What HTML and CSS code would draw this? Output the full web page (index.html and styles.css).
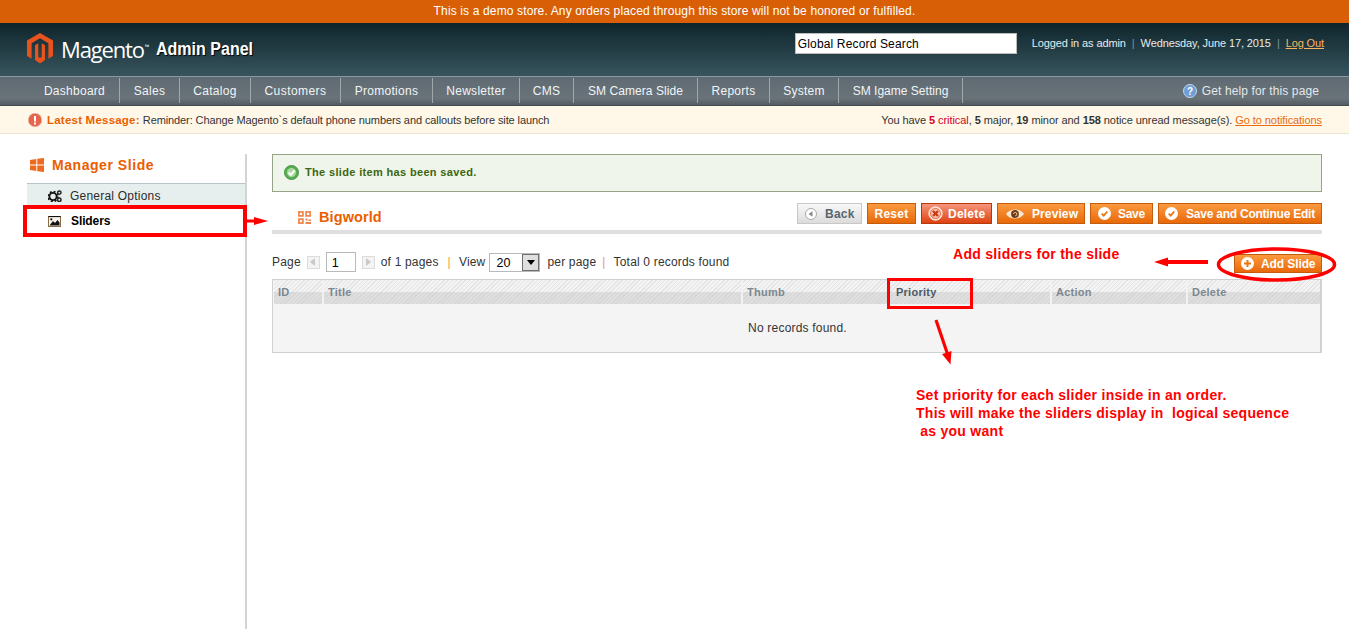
FILE: index.html
```html
<!DOCTYPE html>
<html lang="en">
<head>
<meta charset="utf-8">
<title>Magento Admin Panel</title>
<link rel="stylesheet" href="styles.css">
</head>
<body>
<div class="page">
  <div class="demo">This is a demo store. Any orders placed through this store will not be honored or fulfilled.</div>
  <header class="header">
    <div class="logo">
      <svg class="logo-mark" viewBox="0 0 26 31" width="26" height="31"><path fill="#e8531d" d="M13 0 26 7.500V23l-4.600 2.700V10.200L13 5.300 4.600 10.200v15.500L0 23V7.500z"/><path fill="#e8531d" d="M8 12.200 11.300 10.300V24l1.700 1 1.700-1V10.300L18 12.200V27l-5 3.500L8 27z"/></svg>
      <span class="logo-word">Magento<sup class="tm">™</sup></span>
      <span class="logo-sub">Admin Panel</span>
    </div>
    <div class="header-right">
      <div class="search">Global Record Search</div>
      <div class="user"><span>Logged in as admin</span><i>|</i><span>Wednesday, June 17, 2015</span><i>|</i><a class="logout">Log Out</a></div>
    </div>
  </header>
  <nav class="nav">
    <ul class="menu">
      <li>Dashboard</li><li>Sales</li><li>Catalog</li><li>Customers</li><li>Promotions</li><li>Newsletter</li><li>CMS</li><li>SM Camera Slide</li><li>Reports</li><li>System</li><li>SM Igame Setting</li>
    </ul>
    <div class="help">
      <svg viewBox="0 0 14 14" width="14" height="14"><circle cx="7" cy="7" r="6.500" fill="#6d9fd6" stroke="#c3d7ee"/><text class="help-q" x="7" y="10.500" text-anchor="middle">?</text></svg>
      <span>Get help for this page</span>
    </div>
  </nav>
  <div class="notice">
    <div class="notice-left">
      <svg viewBox="0 0 14 14" width="14" height="14"><circle cx="7" cy="7" r="6.800" fill="#e8644a" stroke="#d9c4b4" stroke-width=".6"/><rect x="6" y="3" width="2" height="5.500" fill="#fff"/><rect x="6" y="9.500" width="2" height="2" fill="#fff"/></svg>
      <b class="latest">Latest Message:</b> <span>Reminder: Change Magento`s default phone numbers and callouts before site launch</span>
    </div>
    <div class="notice-right">You have <span class="crit"><b>5</b> critical</span>, <b>5</b> major, <b>19</b> minor and <b>158</b> notice unread message(s). <a class="goto">Go to notifications</a></div>
  </div>

  <main class="main">
    <aside class="side">
      <h3 class="side-title">
        <svg viewBox="0 0 14 14" width="14" height="14"><path fill="#ee6a1f" d="M0 2 6.300 1V6.500H0zM7.300.800 14 0V6.500H7.300zM0 7.500H6.300V13L0 12zM7.300 7.500H14V14L7.300 13.200z"/></svg>
        Manager Slide
      </h3>
      <ul class="side-list">
        <li class="side-item side-general">
          <svg viewBox="0 0 14 12" width="14" height="12"><circle cx="5" cy="6.500" r="3.600" fill="none" stroke="#111" stroke-width="1.800"/><circle cx="5" cy="6.500" r="5" fill="none" stroke="#111" stroke-width="1.600" stroke-dasharray="2 1.930"/><circle cx="11.300" cy="2.600" r="1.700" fill="none" stroke="#222" stroke-width="1.500"/><circle cx="11.300" cy="9.800" r="1.700" fill="none" stroke="#222" stroke-width="1.500"/></svg>
          General Options
        </li>
        <li class="side-item side-active">
          <svg viewBox="0 0 13 11" width="13" height="11"><rect x=".5" y=".5" width="12" height="10" fill="#f7f3ea" stroke="#8a6f4a"/><path d="M.5 .5H12.500" stroke="#111" stroke-width="1.200"/><path fill="#111" d="M1.500 9.500 5 5l2 2 2.500-3 2 2.500v3z"/><circle cx="3.300" cy="3.300" r="1.100" fill="#111"/></svg>
          Sliders
        </li>
      </ul>
    </aside>

    <section class="content">
      <div class="success">
        <svg viewBox="0 0 15 15" width="15" height="15"><circle cx="7.500" cy="7.500" r="7" fill="#55ad4e" stroke="#4a9248"/><circle cx="7.500" cy="7.500" r="4.500" fill="#a9d9a0"/><path d="M4.500 7.500 6.800 9.900 10.600 5.400" fill="none" stroke="#fff" stroke-width="1.900"/></svg>
        <span>The slide item has been saved.</span>
      </div>

      <div class="head">
        <h3 class="head-title">
          <svg viewBox="0 0 13 13" width="13" height="13"><g fill="#fff" stroke="#f0864a" stroke-width="1.700"><rect x=".9" y=".9" width="4" height="4"/><rect x="8.100" y=".9" width="4" height="4"/><rect x=".9" y="8.100" width="4" height="4"/></g><path fill="#f0864a" d="M7.500 7.500h2v2h-2zM10.500 8.500h2.500v1.500h-2.500zM7.500 11h5.500v2H7.500z"/></svg>
          Bigworld
        </h3>
        <div class="actions">
          <button class="btn btn-back"><svg viewBox="0 0 12 12" width="12" height="12"><circle cx="6" cy="6" r="5.500" fill="#fff" stroke="#aaa"/><path d="M7.500 3.200V8.800L3.500 6z" fill="#888"/></svg><span>Back</span></button>
          <button class="btn btn-reset">Reset</button>
          <button class="btn btn-del"><svg viewBox="0 0 15 15" width="15" height="15"><circle cx="7.500" cy="7.500" r="6.700" fill="#f9d8cb" stroke="#fbe3d9"/><circle cx="7.500" cy="7.500" r="5" fill="#f6c4b2" stroke="#e0532a" stroke-width=".8"/><path d="M5 5 10 10M10 5 5 10" stroke="#c93a14" stroke-width="2.300"/></svg><span>Delete</span></button>
          <button class="btn btn-preview"><svg viewBox="0 0 18 12" width="18" height="12"><path d="M0 6C4 0 14 0 18 6 14 12 4 12 0 6z" fill="#fbe6d0"/><circle cx="9" cy="6" r="3.900" fill="#6e3a12"/><path d="M7.500 6a1.700 1.700 0 1 1 1.700 1.800" fill="none" stroke="#f3c69a" stroke-width="1"/></svg><span>Preview</span></button>
          <button class="btn btn-save"><svg viewBox="0 0 13 13" width="13" height="13"><circle cx="6.500" cy="6.500" r="6.500" fill="#fff"/><path d="M3.700 6.700 5.700 8.700 9.300 4.500" fill="none" stroke="#e8780f" stroke-width="1.800"/></svg><span>Save</span></button>
          <button class="btn btn-cont"><svg viewBox="0 0 13 13" width="13" height="13"><circle cx="6.500" cy="6.500" r="6.500" fill="#fff"/><path d="M3.700 6.700 5.700 8.700 9.300 4.500" fill="none" stroke="#e8780f" stroke-width="1.800"/></svg><span>Save and Continue Edit</span></button>
        </div>
      </div>

      <div class="pager">
        <div class="pager-left">
          <span>Page</span>
          <span class="arrow-box"><svg viewBox="0 0 6 8" width="6" height="8"><path d="M5 0V8L0 4z" fill="#c9c9c9"/></svg></span>
          <span class="page-input">1</span>
          <span class="arrow-box"><svg viewBox="0 0 6 8" width="6" height="8"><path d="M1 0V8L6 4z" fill="#c9c9c9"/></svg></span>
          <span>of 1 pages</span>
          <i class="sep">|</i>
          <span>View</span>
          <span class="select"><span class="select-val">20</span><span class="select-btn"><svg viewBox="0 0 8 5" width="8" height="5"><path d="M0 0H8L4 5z" fill="#000"/></svg></span></span>
          <span>per page</span>
          <i class="sep sep-last">|</i>
          <span>Total 0 records found</span>
        </div>
        <button class="btn btn-add"><svg viewBox="0 0 13 13" width="13" height="13"><circle cx="6.500" cy="6.500" r="6.500" fill="#fff"/><path d="M6.500 3V10M3 6.500H10" stroke="#e8780f" stroke-width="2"/></svg><span>Add Slide</span></button>
      </div>

      <div class="grid">
        <div class="grid-head">
          <div class="col col-id">ID</div>
          <div class="col col-title">Title</div>
          <div class="col col-thumb">Thumb</div>
          <div class="col col-pri">Priority</div>
          <div class="col col-act">Action</div>
          <div class="col col-del">Delete</div>
        </div>
        <div class="grid-empty">No records found.</div>
      </div>
    </section>
  </main>

  <div class="mark mark-sliders"></div>
  <div class="mark mark-priority"></div>
  <svg class="overlay" viewBox="0 0 1349 631" width="1349" height="631">
    <path d="M247 219.500h7V217l14 4-14 4v-2.500h-7z" fill="#f00"/>
    <path d="M1208 260h-40v-2.500l-14 4.500 14 4.500V264h40z" fill="#f00"/>
    <ellipse cx="1276.500" cy="264.500" rx="58" ry="15.500" fill="none" stroke="#f00" stroke-width="3.500"/>
    <path d="M934.500 320.500 937.500 319.500 948.500 352 951.500 351 950.500 364.500 942 354 945.500 353z" fill="#f00"/>
  </svg>
  <div class="note note-add">Add sliders for the slide</div>
  <div class="note note-pri">Set priority for each slider inside in an order.<br>This will make the sliders display in&nbsp; logical sequence<br>&nbsp;as you want</div>
</div>
</body>
</html>
```
FILE: styles.css
```css
* { box-sizing: border-box; }
html, body { margin: 0; padding: 0; }
body { font-family: "Liberation Sans", Arial, sans-serif; font-size: 12px; color: #2f2f2f; background: #fff; overflow: hidden; }
ul { list-style: none; margin: 0; padding: 0; }
h3 { margin: 0; }
i { font-style: normal; }
.page { position: relative; width: 1349px; height: 631px; overflow: hidden; }

.demo { height: 23px; line-height: 22px; background: #d95f07; color: #fff; text-align: center; letter-spacing: .14px; }

.header { height: 54px; display: flex; justify-content: space-between; background: linear-gradient(#0f252b, #37545e); border-bottom: 1px solid #8b9aa0; padding: 0 25px 0 27px; }
.logo { display: flex; align-items: center; height: 51px; color: #fff; }
.logo-mark { margin-right: 8px; }
.logo-word { font-family: "Open Sans", sans-serif; font-size: 22px; font-weight: 400; letter-spacing: -1.150px; }
.tm { font-size: 6px; vertical-align: 9px; line-height: 0; letter-spacing: 0; margin-left: 1px; }
.logo-sub { font-weight: 700; font-size: 18px; margin: 2px 0 0 7px; transform: scaleX(.89); transform-origin: left center; text-shadow: 1px 1px 1px #000; white-space: nowrap; }
.header-right { display: flex; align-items: flex-start; padding-top: 10px; }
.search { width: 222px; height: 21px; background: #fff; border: 1px solid #bbb; line-height: 20px; padding-left: 2px; color: #000; letter-spacing: .15px; margin-right: 15px; }
.user { display: flex; line-height: 20px; font-size: 11px; color: #e4ecee; letter-spacing: -.11px; }
.user i { margin: 0 6px; color: #7f969d; }
.logout { color: #f7b35f; text-decoration: underline; }

.nav { height: 29px; display: flex; justify-content: space-between; padding: 1px 0 0 30px; background: linear-gradient(#5e6a73, #6a7379 75%, #555d63); border-bottom: 1px solid #444b50; color: #f2f5f6; }
.menu { display: flex; height: 25px; }
.menu li { text-align: center; line-height: 27px; border-right: 1px solid #9fa8ad; letter-spacing: .27px; white-space: nowrap; }
.menu li:nth-child(1) { width: 90px; }
.menu li:nth-child(2) { width: 60px; }
.menu li:nth-child(3) { width: 71px; }
.menu li:nth-child(4) { width: 90px; letter-spacing: .45px; }
.menu li:nth-child(5) { width: 92px; }
.menu li:nth-child(6) { width: 87px; }
.menu li:nth-child(7) { width: 54px; }
.menu li:nth-child(8) { width: 124px; letter-spacing: .08px; }
.menu li:nth-child(9) { width: 72px; }
.menu li:nth-child(10) { width: 69px; }
.menu li:nth-child(11) { width: 124px; letter-spacing: .02px; }
.help { display: flex; align-items: center; height: 25px; margin-right: 30px; letter-spacing: .11px; color: #e3e8ea; gap: 5px; }
.help-q { font: bold 10px "Liberation Sans", sans-serif; fill: #fff; }

.notice { height: 28px; display: flex; justify-content: space-between; align-items: center; padding: 0 27px 0 28px; background: #fff8e8; border-bottom: 1px solid #ece5d2; font-size: 11px; letter-spacing: -.1px; color: #333; }
.notice-left { display: flex; align-items: center; gap: 4px; }
.latest { color: #eb5e00; font-size: 11.500px; letter-spacing: .22px; margin-left: 1px; }
.notice-left span { margin-left: -1px; }
.notice-right { letter-spacing: -.07px; }
.crit { color: #d5002b; }
.goto { color: #ea6a0c; text-decoration: underline; }

.main { display: flex; padding: 20px 27px 0; height: 497px; }
.side { width: 220px; flex: none; border-right: 2px solid #d4d4d4; height: 475px; }
.side-title { display: flex; align-items: center; gap: 8px; height: 29px; padding: 0 0 7px 3px; font-size: 14px; color: #eb5e00; letter-spacing: .55px; }
.side-list { border-top: 1px solid #b6c6c8; }
.side-item { display: flex; align-items: center; height: 24px; padding-left: 21px; gap: 8px; letter-spacing: .22px; color: #2b2b2b; }
.side-general { background: #e7efee; }
.side-active { font-weight: 700; color: #000; height: 26px; letter-spacing: -.1px; gap: 10px; }

.content { flex: 1; margin-left: 25px; min-width: 0; }
.success { height: 38px; display: flex; align-items: center; gap: 6px; padding: 0 0 2px 11px; background: #eff5ea; border: 1px solid #95a486; color: #3d6611; font-weight: 700; font-size: 11px; letter-spacing: .34px; }

.head { height: 42px; display: flex; justify-content: space-between; align-items: flex-start; padding-top: 11px; border-bottom: 4px solid #dfdfdf; }
.head-title { display: flex; align-items: center; gap: 8px; padding: 6px 0 0 26px; font-size: 14.500px; color: #eb5e00; letter-spacing: .1px; }
.actions { display: flex; gap: 5px; }
.btn { display: inline-flex; align-items: center; justify-content: flex-start; height: 21px; padding: 0; border: 1px solid #c45c0b; background: linear-gradient(#fb9a3f, #e8690a); color: #fff; font: 700 12px "Liberation Sans", sans-serif; letter-spacing: .22px; margin: 0; white-space: nowrap; }
.btn-back { width: 65px; padding-left: 7px; gap: 8px; background: linear-gradient(#f8f8f8, #dcdcdc); border-color: #c8c8c8; color: #59656e; }
.btn-reset { width: 49px; justify-content: center; }
.btn-del { width: 71px; padding-left: 6px; gap: 5px; background: linear-gradient(#f5957d, #de4310); border-color: #b53a08; }
.btn-preview { width: 88px; padding-left: 8px; gap: 8px; letter-spacing: .1px; }
.btn-save { width: 63px; padding-left: 7px; gap: 7px; letter-spacing: -.3px; }
.btn-cont { width: 164px; padding-left: 6px; gap: 8px; letter-spacing: -.23px; }
.btn-add { width: 88px; height: 19px; margin-top: 2px; padding-left: 6px; gap: 7px; letter-spacing: -.1px; }

.pager { height: 45px; display: flex; justify-content: space-between; align-items: flex-start; padding-top: 18px; }
.pager-left { display: flex; align-items: center; height: 20px; letter-spacing: .18px; color: #333; }
.arrow-box { display: inline-flex; align-items: center; justify-content: center; width: 13px; height: 13px; margin: 0 6px; border: 1px solid #dcdcdc; background: #f4f4f4; }
.page-input { width: 30px; height: 20px; border: 1px solid #b9b9b9; line-height: 20px; padding-left: 5px; color: #000; font-size: 12.500px; }
.sep { margin: 0 8px 0 9px; color: #ee9a4c; }
.sep-last { margin: 0 8px 0 6px; }
.select { display: inline-flex; width: 51px; height: 19px; margin: 0 7px 0 4px; border: 1px solid #b9b9b9; }
.select-val { flex: 1; line-height: 18px; padding-left: 6px; color: #000; font-size: 12.500px; }
.select-btn { width: 17px; display: flex; align-items: center; justify-content: center; background: #dfdfdf; border: 1px solid #6e6e6e; }

.grid { border: 1px solid #cdd3d3; border-right-width: 2px; background: #f4f4f4; height: 74px; }
.grid-head { display: flex; height: 24px; margin: 0 0 0 1px; background: repeating-linear-gradient(135deg, #e4e4e4 0 1px, #f3f3f3 1px 3px) top / 100% 12px no-repeat, repeating-linear-gradient(135deg, #d6d6d6 0 1px, #dedede 1px 3px); font-weight: 700; font-size: 11px; color: #7c8890; letter-spacing: .25px; }
.col { padding: 0 0 0 4px; line-height: 25px; border-right: 2px solid #f2f2f2; }
.col-id { width: 50px; }
.col-title { width: 419px; }
.col-thumb { width: 146px; }
.col-pri { width: 163px; padding-left: 7px; color: #4b5a66; }
.col-act { width: 136px; }
.col-del { flex: 1; border-right: 0; }
.grid-empty { text-align: center; line-height: 48px; padding-left: 2px; color: #333; letter-spacing: .2px; }

.mark { position: absolute; border: 3px solid #f00; }
.mark-sliders { left: 23px; top: 205px; width: 224px; height: 32px; border-width: 4px; }
.mark-priority { left: 887px; top: 278px; width: 86px; height: 31px; border-width: 3px; }
.overlay { position: absolute; left: 0; top: 0; pointer-events: none; }
.note { position: absolute; color: #f00; font-weight: 700; font-size: 14px; letter-spacing: .28px; white-space: nowrap; }
.note-add { left: 953px; top: 246px; line-height: 17px; }
.note-pri { left: 916px; top: 386px; line-height: 18px; }
```
